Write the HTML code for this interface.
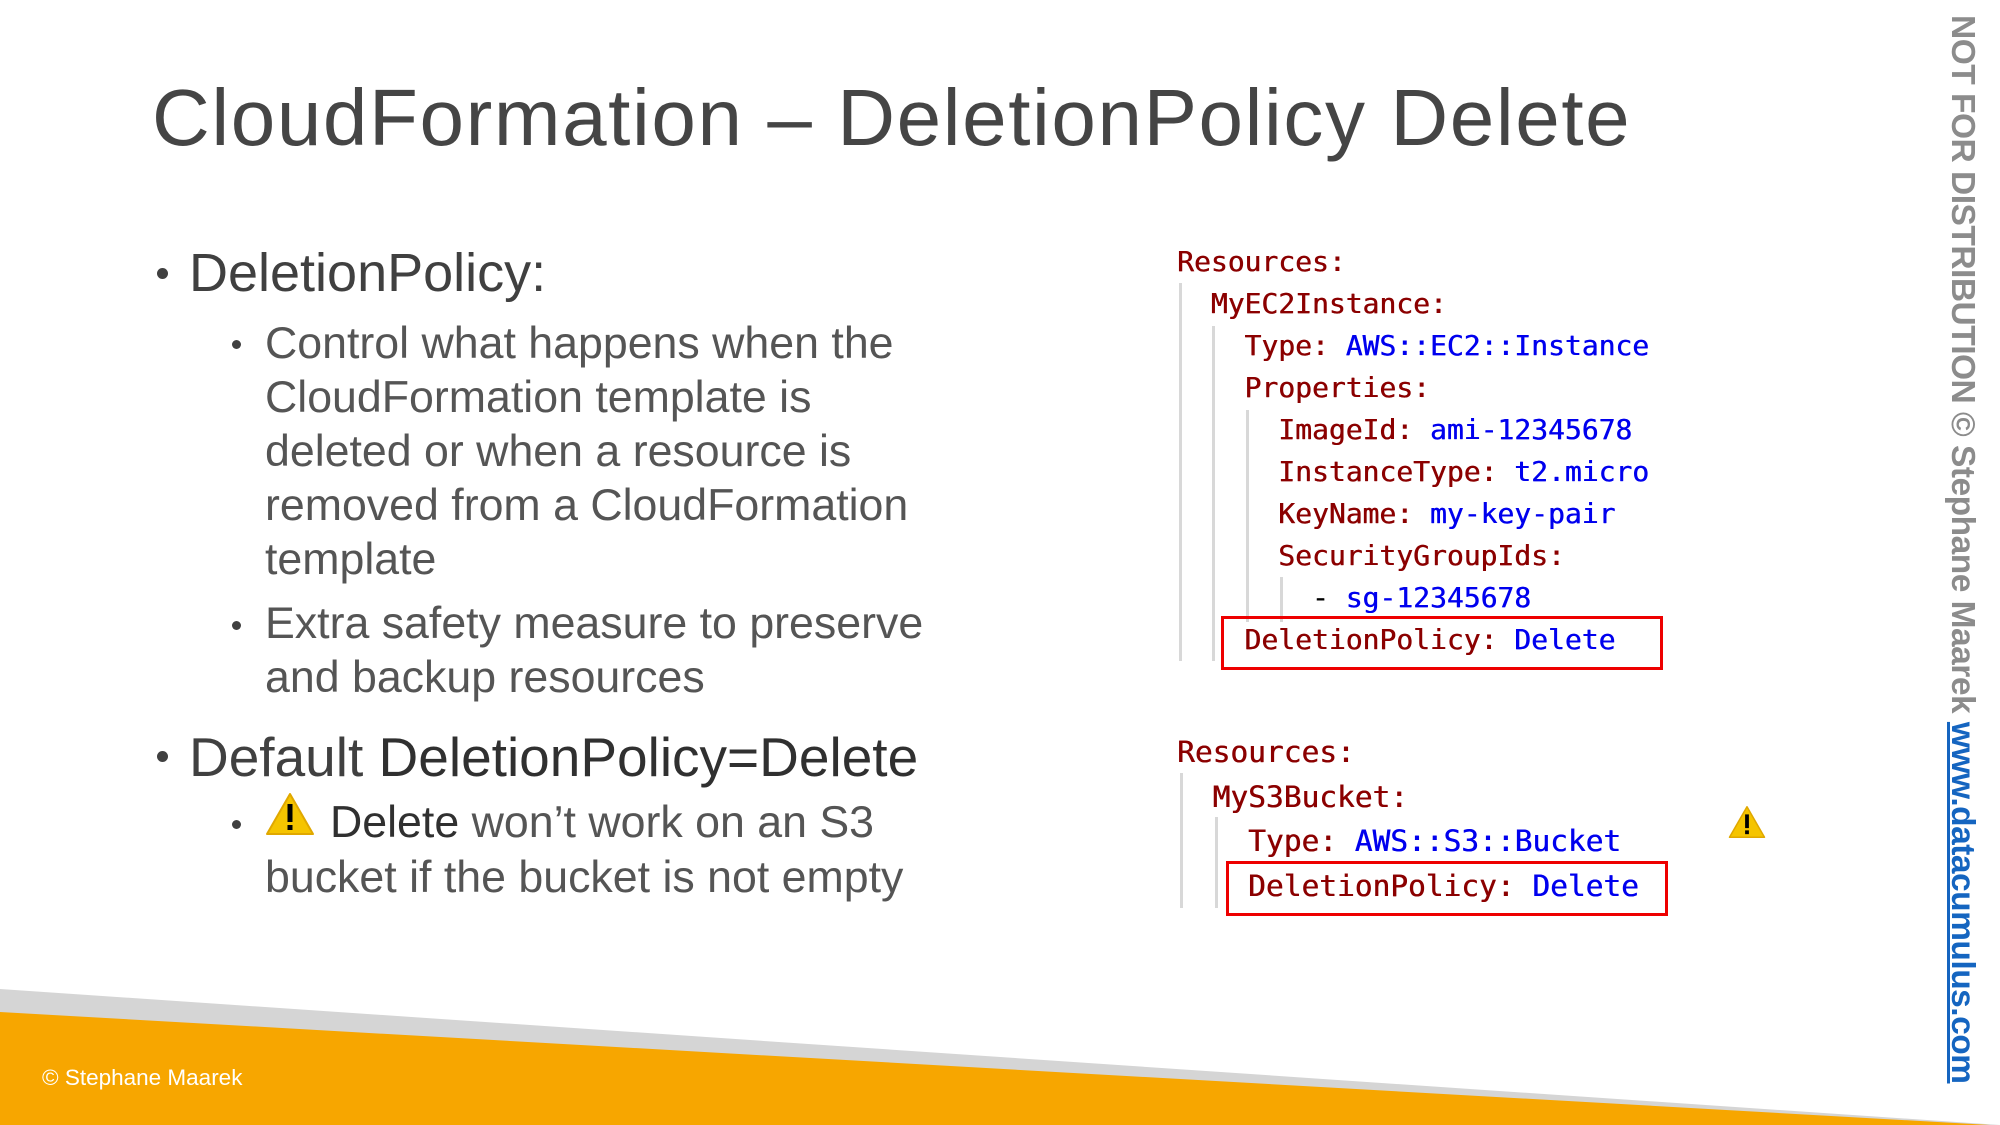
<!DOCTYPE html>
<html><head><meta charset="utf-8"><style>
*{margin:0;padding:0}
body{width:2000px;height:1125px;overflow:hidden;background:#fff;position:relative;font-family:"Liberation Sans",sans-serif;color:#404040}
.a{position:absolute;white-space:nowrap}
.t{left:152px;top:72px;font-size:80px;font-weight:300;color:#454545;letter-spacing:1.6px}
.l1{font-size:54px;color:#404040}
.l2{font-size:44.7px;color:#555}
.dot{position:absolute;border-radius:50%;background:#404040}
.code{font-family:"DejaVu Sans Mono","Liberation Mono",monospace;font-size:28px;color:#8b0000;text-shadow:0.5px 0 0 currentColor}
.code b{font-weight:normal;color:#0000ee}
.g{position:absolute;width:3px;background:#d8d8d8}
.box{position:absolute;border:3px solid #ee0000}
</style></head><body>
<div class="a t">CloudFormation – DeletionPolicy Delete</div>

<div class="dot" style="left:157px;top:268px;width:11px;height:11px"></div>
<div class="a l1" style="left:189px;top:242px">DeletionPolicy:</div>
<div class="dot" style="left:232px;top:340px;width:9px;height:9px"></div>
<div class="a l2" style="left:265px;top:317px;line-height:54px">Control what happens when the<br>CloudFormation template is<br>deleted or when a resource is<br>removed from a CloudFormation<br>template</div>
<div class="dot" style="left:232px;top:621px;width:9px;height:9px"></div>
<div class="a l2" style="left:265px;top:597px;line-height:54px">Extra safety measure to preserve<br>and backup resources</div>

<div class="dot" style="left:157px;top:751px;width:11px;height:11px"></div>
<div class="a l1" style="left:189px;top:725px;font-size:55px">Default <span style="color:#303030">DeletionPolicy=Delete</span></div>
<div class="dot" style="left:232px;top:820px;width:9px;height:9px"></div>
<svg class="a" style="left:265px;top:792px" width="50" height="44" viewBox="0 0 50 44"><path d="M25 2 L48 42 L2 42 Z" fill="#f5c400" stroke="#e0a800" stroke-width="2" stroke-linejoin="round"/><rect x="22.5" y="12" width="5" height="18" fill="#000"/><rect x="22.5" y="33" width="5" height="5" fill="#000"/></svg>
<div class="a l2" style="left:330px;top:798px"><span style="color:#303030">Delete</span> won’t work on an S3</div>
<div class="a l2" style="left:265px;top:853px">bucket if the bucket is not empty</div>

<div class="g" style="left:1179px;top:283px;height:378px"></div>
<div class="g" style="left:1212px;top:326px;height:335px"></div>
<div class="g" style="left:1246px;top:410px;height:212px"></div>
<div class="g" style="left:1280px;top:577px;height:45px"></div>
<div class="a code" style="left:1177px;top:241px;line-height:42px">Resources:<br>&nbsp;&nbsp;MyEC2Instance:<br>&nbsp;&nbsp;&nbsp;&nbsp;Type: <b>AWS::EC2::Instance</b><br>&nbsp;&nbsp;&nbsp;&nbsp;Properties:<br>&nbsp;&nbsp;&nbsp;&nbsp;&nbsp;&nbsp;ImageId: <b>ami-12345678</b><br>&nbsp;&nbsp;&nbsp;&nbsp;&nbsp;&nbsp;InstanceType: <b>t2.micro</b><br>&nbsp;&nbsp;&nbsp;&nbsp;&nbsp;&nbsp;KeyName: <b>my-key-pair</b><br>&nbsp;&nbsp;&nbsp;&nbsp;&nbsp;&nbsp;SecurityGroupIds:<br>&nbsp;&nbsp;&nbsp;&nbsp;&nbsp;&nbsp;&nbsp;&nbsp;<span style="color:#000">-</span> <b>sg-12345678</b><br>&nbsp;&nbsp;&nbsp;&nbsp;DeletionPolicy: <b>Delete</b></div>
<div class="box" style="left:1221px;top:616px;width:436px;height:48px"></div>

<div class="g" style="left:1180px;top:773px;height:135px"></div>
<div class="g" style="left:1215px;top:817px;height:91px"></div>
<div class="a code" style="left:1177px;top:730px;line-height:44.6px;font-size:29.5px">Resources:<br>&nbsp;&nbsp;MyS3Bucket:<br>&nbsp;&nbsp;&nbsp;&nbsp;Type: <b>AWS::S3::Bucket</b><br>&nbsp;&nbsp;&nbsp;&nbsp;DeletionPolicy: <b>Delete</b></div>
<div class="box" style="left:1226px;top:861px;width:436px;height:49px"></div>
<svg class="a" style="left:1728px;top:805px" width="38" height="34" viewBox="0 0 50 44"><path d="M25 2 L48 42 L2 42 Z" fill="#f5c400" stroke="#e0a800" stroke-width="2" stroke-linejoin="round"/><rect x="22.5" y="12" width="5" height="18" fill="#000"/><rect x="22.5" y="33" width="5" height="5" fill="#000"/></svg>

<svg class="a" style="left:0;top:0" width="2000" height="1125"><polygon points="0,989 2000,1125 0,1125" fill="#d5d5d5"/><polygon points="0,1012 1990,1125 0,1125" fill="#f7a600"/></svg>
<div class="a" style="left:42px;top:1065px;font-size:22.5px;color:#fff">© Stephane Maarek</div>

<div class="a" style="left:1962px;top:15px;transform-origin:0 0;transform:rotate(90deg) translateY(-50%);font-size:33.5px;font-weight:bold;color:#8c8c8c;letter-spacing:-0.5px">NOT FOR DISTRIBUTION © Stephane Maarek <span style="color:#1565c0;text-decoration:underline">www.datacumulus.com</span></div>
</body></html>
